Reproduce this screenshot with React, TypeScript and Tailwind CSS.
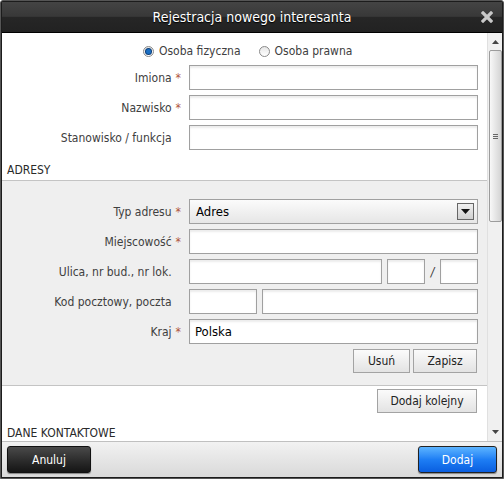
import React from "react";

const font = { fontFamily: '"DejaVu Sans Condensed", "DejaVu Sans", sans-serif' };

function Label({ text, req = false }: { text: string; req?: boolean }) {
  return (
    <div className="w-[181px] shrink-0 text-right text-[12px] text-[#404040] pr-[2px]">
      {text}
      <span className={req ? "text-[#b0533a] ml-[4px]" : "invisible ml-[4px]"}>*</span>
    </div>
  );
}

function Input({ w, value }: { w: string; value?: string }) {
  return (
    <div
      className={`${w} h-[25px] border border-[#a0a0a0] bg-white shadow-[inset_0_2px_2px_rgba(0,0,0,0.08)] flex items-center px-[5px] text-[13px] text-black`}
    >
      {value}
    </div>
  );
}

function Row({ label, req, children }: { label: string; req?: boolean; children: React.ReactNode }) {
  return (
    <div className="flex items-center h-[25px]">
      <Label text={label} req={req} />
      <div className="ml-[6px] flex items-center">{children}</div>
    </div>
  );
}

function GrayBtn({ w, children }: { w: string; children: React.ReactNode }) {
  return (
    <div
      className={`${w} h-[24px] border border-[#a3a3a3] bg-gradient-to-b from-[#fbfbfb] to-[#e3e3e3] flex items-center justify-center text-[12px] text-[#222]`}
    >
      {children}
    </div>
  );
}

function Radio({ on }: { on: boolean }) {
  return (
    <div className="w-[11px] h-[11px] rounded-full border border-[#8a8a8a] bg-gradient-to-b from-[#e6e6e6] to-[#ffffff] flex items-center justify-center">
      {on && <div className="w-[5px] h-[5px] rounded-full bg-[#1a6fc4] shadow-[0_0_0_1px_#0d3f7a]" />}
    </div>
  );
}

export default function App() {
  return (
    <div style={font} className="w-[504px] h-[479px] bg-[#1c1c1c] rounded-t-[3px] p-[1px] flex flex-col border border-[#555]">
      {/* Title bar */}
      <div className="h-[30px] shrink-0 relative flex items-center justify-center bg-[linear-gradient(to_bottom,#444_0%,#383838_48%,#262626_50%,#222_100%)]">
        <span className="text-white text-[14px] [text-shadow:0_1px_1px_#000]">Rejestracja nowego interesanta</span>
        <svg className="absolute right-[9px] top-[9px]" width="12" height="12" viewBox="0 0 12 12">
          <path d="M2 2 L10 10 M10 2 L2 10" stroke="#c8c8c8" strokeWidth="3.2" strokeLinecap="square" />
        </svg>
      </div>
      <div className="h-[1px] bg-black shrink-0" />
      {/* Body */}
      <div className="flex flex-1 min-h-0 bg-white">
        <div className="flex-1 overflow-hidden flex flex-col">
          {/* Radios */}
          <div className="pt-[4px] h-[32px] shrink-0 flex items-center text-[12px] text-[#404040]">
            <div className="ml-[141px] flex items-center gap-[5px]">
              <Radio on />
              <span>Osoba fizyczna</span>
            </div>
            <div className="ml-[18px] flex items-center gap-[5px]">
              <Radio on={false} />
              <span>Osoba prawna</span>
            </div>
          </div>
          <div className="flex flex-col gap-[5px] shrink-0">
            <Row label="Imiona" req>
              <Input w="w-[289px]" />
            </Row>
            <Row label="Nazwisko" req>
              <Input w="w-[289px]" />
            </Row>
            <Row label="Stanowisko / funkcja">
              <Input w="w-[289px]" />
            </Row>
          </div>
          <div className="h-[31px] shrink-0 flex items-end px-[5px] pb-[1px] text-[12px] text-[#2a2a2a] border-b border-[#c4c4c4]">ADRESY</div>
          {/* Address section */}
          <div className="shrink-0 bg-[#efefef] border-b border-[#c4c4c4] pt-[18px] pb-[12px] flex flex-col gap-[5px]">
            <Row label="Typ adresu" req>
              <div className="w-[289px] h-[25px] border border-[#a0a0a0] bg-gradient-to-b from-[#fbfbfb] to-[#e6e6e6] flex items-center justify-between pl-[6px] pr-[3px] text-[13px] text-black">
                <span>Adres</span>
                <div className="w-[17px] h-[17px] border border-[#666] bg-gradient-to-b from-[#f0f0f0] to-[#d0d0d0] flex items-center justify-center">
                  <svg width="9" height="5" viewBox="0 0 9 5"><path d="M0 0 H9 L4.5 5 Z" fill="#111" /></svg>
                </div>
              </div>
            </Row>
            <Row label="Miejscowość" req>
              <Input w="w-[289px]" />
            </Row>
            <Row label="Ulica, nr bud., nr lok.">
              <Input w="w-[193px]" />
              <div className="ml-[5px]">
                <Input w="w-[38px]" />
              </div>
              <span className="w-[15px] text-center text-[12px] text-[#333] italic">/</span>
              <Input w="w-[38px]" />
            </Row>
            <Row label="Kod pocztowy, poczta">
              <Input w="w-[68px]" />
              <div className="ml-[5px]">
                <Input w="w-[216px]" />
              </div>
            </Row>
            <Row label="Kraj" req>
              <Input w="w-[289px]" value="Polska" />
            </Row>
            <div className="flex justify-end pr-[10px] gap-[3px]">
              <GrayBtn w="w-[57px]">Usuń</GrayBtn>
              <GrayBtn w="w-[64px]">Zapisz</GrayBtn>
            </div>
          </div>
          <div className="shrink-0 flex justify-end pr-[10px] pt-[3px]">
            <GrayBtn w="w-[100px]">Dodaj kolejny</GrayBtn>
          </div>
          <div className="shrink-0 mt-[14px] px-[5px] text-[12px] text-[#2a2a2a] leading-[13px]">DANE KONTAKTOWE</div>
        </div>
        {/* Scrollbar */}
        <div className="w-[15px] shrink-0 bg-[#f0f0f0] border-l border-[#e0e0e0] flex flex-col items-center">
          <svg className="mt-[7px]" width="7" height="4" viewBox="0 0 7 4"><path d="M0 4 L3.5 0 L7 4 Z" fill="#444" /></svg>
          <div className="mt-[6px] w-[13px] h-[172px] rounded-[2px] border border-[#9c9c9c] bg-gradient-to-r from-[#f8f8f8] to-[#d4d4d4] flex items-center justify-center">
            <div className="flex flex-col gap-[1px]">
              <div className="w-[5px] h-[1px] bg-[#666]" />
              <div className="w-[5px] h-[1px] bg-[#666]" />
              <div className="w-[5px] h-[1px] bg-[#666]" />
            </div>
          </div>
          <div className="flex-1" />
          <svg className="mb-[7px]" width="7" height="4" viewBox="0 0 7 4"><path d="M0 0 L7 0 L3.5 4 Z" fill="#444" /></svg>
        </div>
      </div>
      {/* Footer */}
      <div className="h-[36px] shrink-0 border-t border-[#c0c0c0] bg-gradient-to-b from-[#f2f2f2] to-[#d9d9d9] flex items-center justify-between px-[5px]">
        <div className="w-[84px] h-[27px] rounded-[3px] border border-[#111] bg-gradient-to-b from-[#4a4a4a] to-[#151515] shadow-[0_1px_1px_rgba(0,0,0,0.4)] flex items-center justify-center text-white text-[12px]">
          Anuluj
        </div>
        <div className="w-[79px] h-[27px] rounded-[3px] border border-[#222] bg-gradient-to-b from-[#5cb4ff] via-[#1e7ef4] to-[#0a5ee0] shadow-[0_1px_1px_rgba(0,0,0,0.4)] flex items-center justify-center text-white text-[12px]">
          Dodaj
        </div>
      </div>
    </div>
  );
}
